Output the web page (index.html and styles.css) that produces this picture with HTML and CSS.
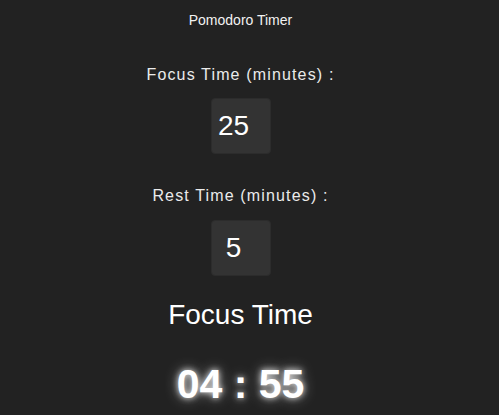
FILE: index.html
```html
<!DOCTYPE html>
<html lang="en">
<head>
<meta charset="utf-8">
<title>Pomodoro Timer</title>
<link rel="stylesheet" href="styles.css">
</head>
<body>
<main class="app">
  <h1 class="title">Pomodoro Timer</h1>
  <label class="field-label" for="focus">Focus Time (minutes) :</label>
  <input class="field-input" id="focus" type="text" value="25">
  <label class="field-label field-label-second" for="rest">Rest Time (minutes) :</label>
  <input class="field-input" id="rest" type="text" value="5">
  <h2 class="mode">Focus Time</h2>
  <div class="clock">04 : 55</div>
</main>
</body>
</html>
```

FILE: styles.css
```css
html, body {
  margin: 0;
  padding: 0;
  background: #222222;
}

body {
  font-family: "Liberation Sans", Arial, sans-serif;
  color: #ffffff;
  height: 415px;
  overflow: hidden;
}

.app {
  width: 481px;
  display: flex;
  flex-direction: column;
  align-items: center;
  padding-top: 12px;
}

.title {
  margin: 0;
  font-size: 14px;
  line-height: 16px;
  font-weight: normal;
  color: #f2f2f2;
}

.field-label {
  margin-top: 37.5px;
  font-size: 16px;
  line-height: 18px;
  letter-spacing: 1.15px;
  color: #ebebeb;
}

.field-label-second {
  margin-top: 33px;
}

.field-input {
  box-sizing: border-box;
  margin-top: 14.5px;
  width: 60px;
  height: 56px;
  padding: 0 15px 0 1px;
  border: 1px solid #2c2c2c;
  border-radius: 4px;
  background: #333333;
  color: #ffffff;
  font-family: "Liberation Sans", Arial, sans-serif;
  font-size: 28px;
  text-align: center;
  outline: none;
}

.mode {
  margin: 23px 0 0;
  font-size: 28px;
  line-height: 32px;
  font-weight: normal;
  color: #ffffff;
}

.clock {
  margin-top: 29px;
  font-size: 41px;
  line-height: 48px;
  font-weight: bold;
  color: #ffffff;
  text-shadow: 0 0 6px rgba(255, 255, 255, 0.9), 0 0 14px rgba(255, 255, 255, 0.5);
}
```
